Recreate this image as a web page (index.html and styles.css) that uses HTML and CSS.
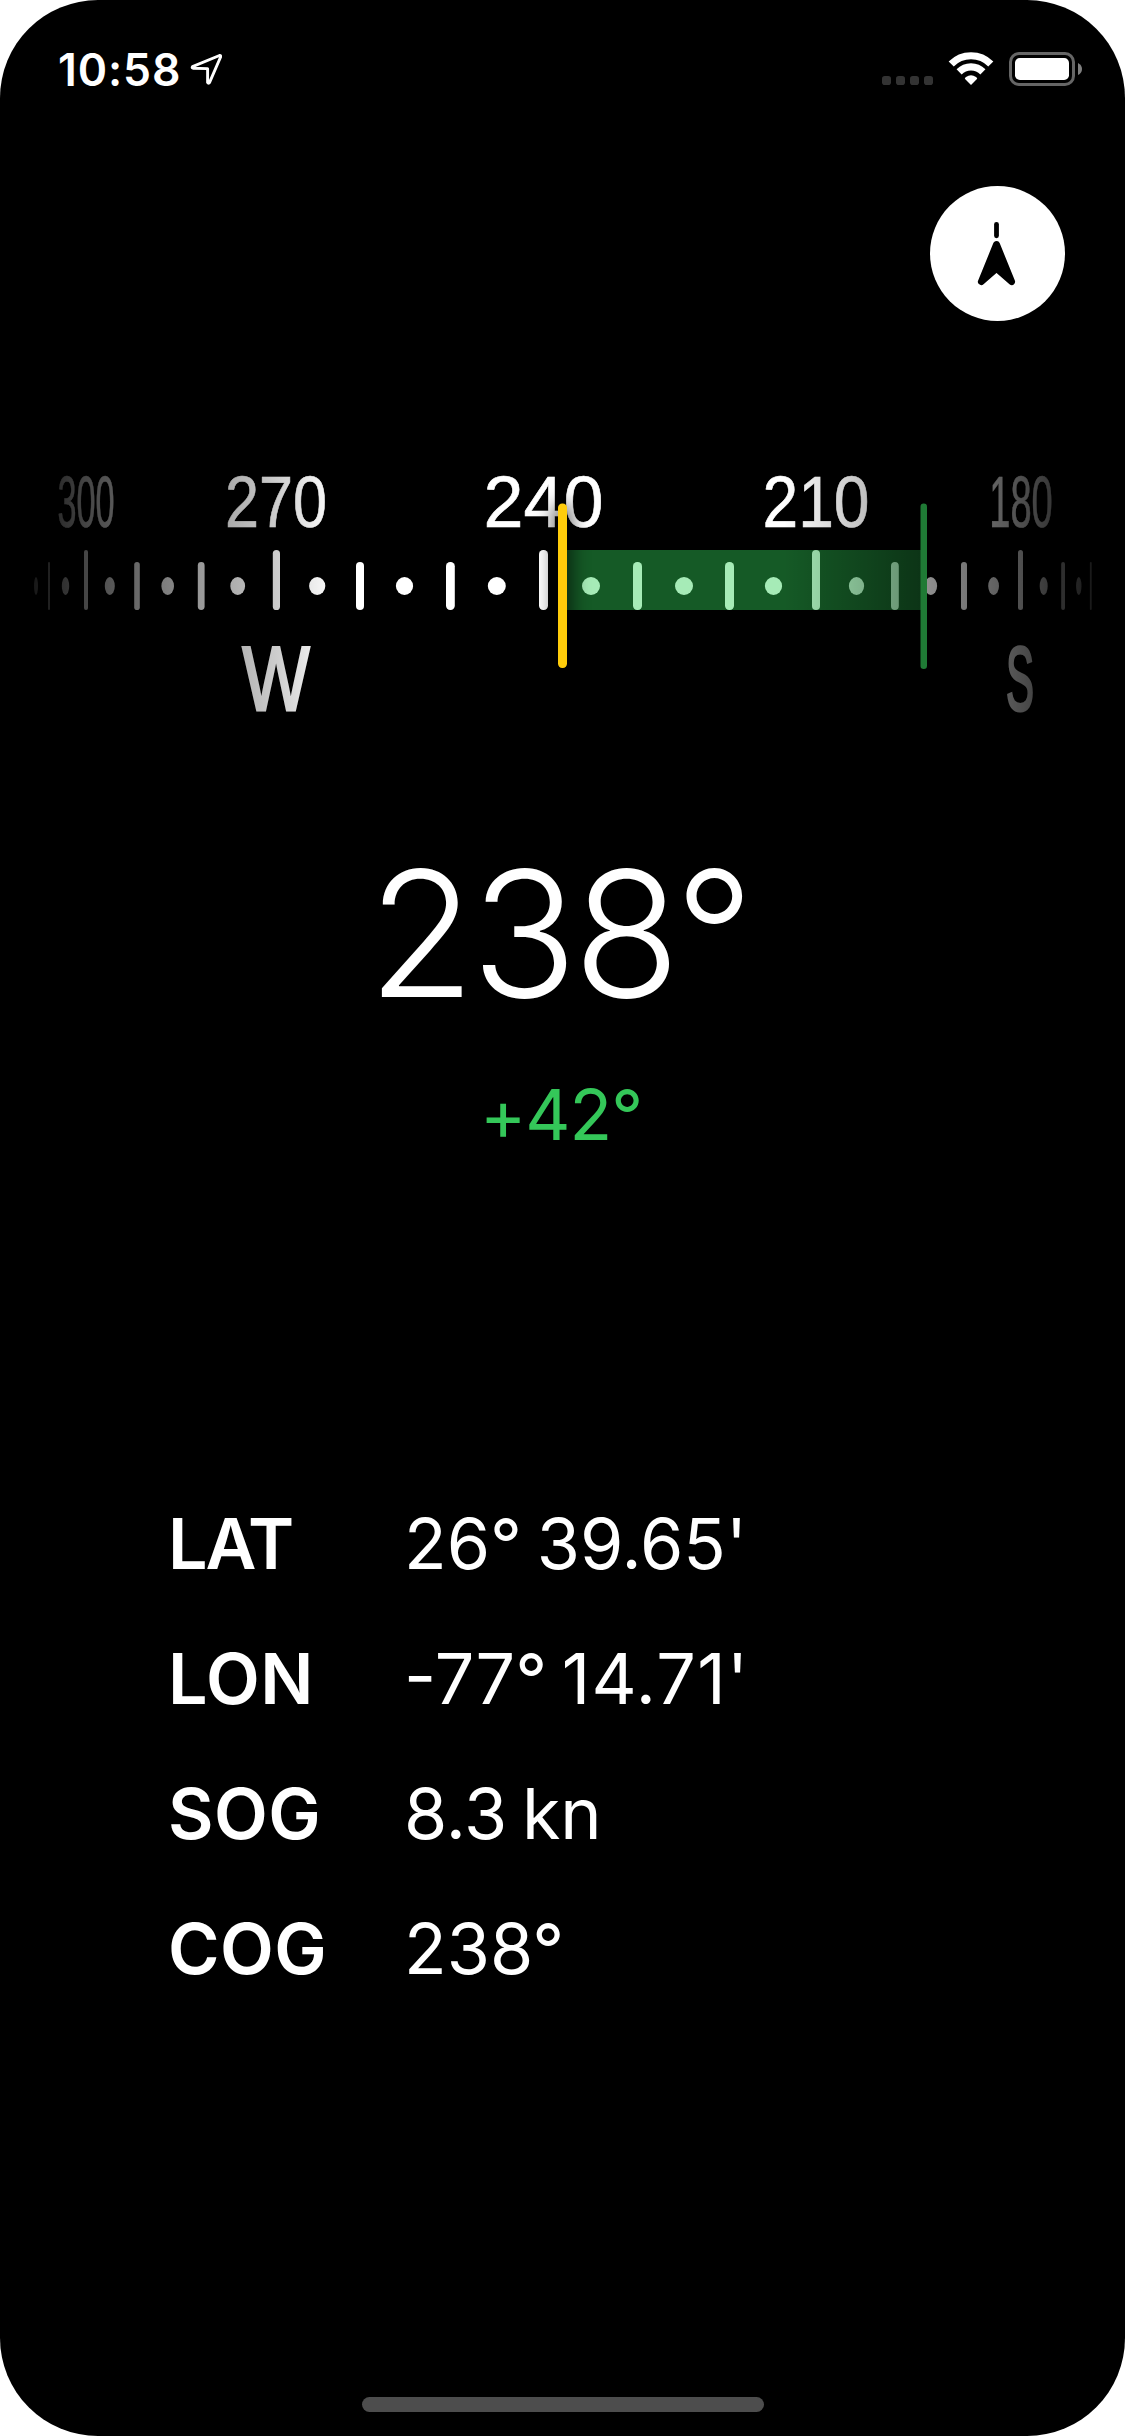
FILE: index.html
```html
<!DOCTYPE html>
<html lang="en">
<head>
<meta charset="utf-8">
<title>Compass</title>
<link rel="stylesheet" href="styles.css">
</head>
<body>
<main class="screen">
  <header class="status">
    <span class="time">10:58</span>
    <svg class="location" width="34" height="34" viewBox="0 0 34 34"><path d="M30.5 3.5 L3.5 14.6 Q2.6 15.8 4 16.2 L18.6 16.6 L18.6 30.5 Q19.6 32 20.7 30.2 L31.6 5 Q31.9 3.2 30.5 3.5 Z" fill="none" stroke="#fff" stroke-width="2.9" stroke-linejoin="round"/></svg>
    <svg class="indicators" width="204" height="36" viewBox="880 51 204 36">
      <g fill="#333"><rect x="882" y="76" width="9" height="9" rx="2.8"/><rect x="896" y="76" width="9" height="9" rx="2.8"/><rect x="910" y="76" width="9" height="9" rx="2.8"/><rect x="924" y="76" width="9" height="9" rx="2.8"/></g>
      <g fill="none" stroke="#fff" stroke-width="7.2"><path d="M951.2 64 A27.9 27.9 0 0 1 990.8 64"/><path d="M959.1 71.9 A16.8 16.8 0 0 1 982.9 71.9"/></g>
      <path d="M971 85 L964.8 78.8 Q965 77.8 966 77 Q971 73.4 976 77 Q977 77.8 977.2 78.8 Z" fill="#fff"/>
      <rect x="1010.5" y="53.5" width="63" height="31" rx="8.5" fill="none" stroke="#666" stroke-width="3"/>
      <rect x="1015" y="58" width="54" height="22" rx="4.8" fill="#fff"/>
      <path d="M1078 63 Q1082 65 1082 69 Q1082 73 1078 75 Z" fill="#808080"/>
    </svg>
  </header>

  <div class="toolbar">
    <button class="heading-mode" aria-label="Heading mode">
      <svg width="135" height="135" viewBox="930 186 135 135"><path d="M996.5 224.3 V235.8" stroke="#000" stroke-width="4.8" stroke-linecap="round"/><path d="M996.5 244.4 L981.3 281.7 L996.5 268.5 L1011.7 281.7 Z" stroke="#000" stroke-width="6.8" stroke-linejoin="round"/></svg>
    </button>
  </div>

  <svg class="dial" width="1125" height="260" viewBox="0 470 1125 260">
    <defs>
      <linearGradient id="fade" gradientUnits="userSpaceOnUse" x1="0" y1="0" x2="1125" y2="0">
        <stop offset=".0267" stop-opacity=".92"/><stop offset=".0436" stop-opacity=".86"/><stop offset=".0764" stop-opacity=".73"/>
        <stop offset=".1218" stop-opacity=".59"/><stop offset=".1787" stop-opacity=".4"/><stop offset=".2453" stop-opacity=".2"/>
        <stop offset=".2818" stop-opacity=".06"/><stop offset=".3" stop-opacity="0"/><stop offset=".697" stop-opacity="0"/>
        <stop offset=".7253" stop-opacity=".1"/><stop offset=".762" stop-opacity=".22"/><stop offset=".8276" stop-opacity=".45"/>
        <stop offset=".8569" stop-opacity=".53"/><stop offset=".9069" stop-opacity=".69"/><stop offset=".9449" stop-opacity=".82"/><stop offset=".97" stop-opacity=".9"/>
      </linearGradient>
      <filter id="soft" filterUnits="userSpaceOnUse" x="500" y="470" width="125" height="240"><feGaussianBlur stdDeviation="9"/></filter>
    </defs>
    <g fill="#fff">
      <g class="degrees">
        <text x="86" y="527" textLength="57" lengthAdjust="spacingAndGlyphs">300</text>
        <text x="276" y="527" textLength="102" lengthAdjust="spacingAndGlyphs">270</text>
        <text x="543.5" y="527" textLength="120" lengthAdjust="spacingAndGlyphs">240</text>
        <text x="816" y="527" textLength="107" lengthAdjust="spacingAndGlyphs">210</text>
        <text x="1021" y="527" textLength="63.5" lengthAdjust="spacingAndGlyphs">180</text>
      </g>
      <g class="cardinals">
        <text x="276" y="709.8" textLength="67" lengthAdjust="spacingAndGlyphs">W</text>
        <text x="1020" y="709.8" textLength="28" lengthAdjust="spacingAndGlyphs">S</text>
      </g>
      <rect x="48.1" y="562" width="1.8" height="48" rx=".9"/><rect x="84" y="550" width="4" height="60" rx="2"/>
      <rect x="134.2" y="562" width="5.6" height="48" rx="2.8"/><rect x="197.8" y="562" width="6.8" height="48" rx="3.4"/>
      <rect x="272.8" y="550" width="7.2" height="60" rx="3.6"/><rect x="356" y="562" width="8" height="48" rx="4"/>
      <rect x="446" y="562" width="8.8" height="48" rx="4.2"/><rect x="539" y="550" width="9" height="60" rx="4.2"/>
      <rect x="633" y="562" width="9" height="48" rx="4.2"/><rect x="725" y="562" width="9" height="48" rx="4.2"/>
      <rect x="812" y="550" width="8" height="60" rx="4"/><rect x="891" y="562" width="7.8" height="48" rx="3.9"/>
      <rect x="961" y="562" width="6" height="48" rx="3"/><rect x="1018" y="550" width="5" height="60" rx="2.5"/>
      <rect x="1061.2" y="562" width="3.8" height="48" rx="1.9"/><rect x="1089.9" y="562" width="1.8" height="48" rx=".9"/>
      <ellipse cx="36" cy="586" rx="2" ry="9"/><ellipse cx="65.5" cy="586" rx="3.7" ry="9"/><ellipse cx="109.8" cy="586" rx="5" ry="9"/>
      <ellipse cx="167.7" cy="586" rx="6.3" ry="9"/><ellipse cx="237.7" cy="586" rx="7.4" ry="9"/><ellipse cx="317.2" cy="586" rx="8.1" ry="9"/>
      <ellipse cx="404.5" cy="586" rx="8.6" ry="9"/><ellipse cx="496.8" cy="586" rx="9" ry="9"/><ellipse cx="591" cy="586" rx="9" ry="9"/>
      <ellipse cx="684" cy="586" rx="9" ry="9"/><ellipse cx="773.5" cy="586" rx="8.6" ry="9"/><ellipse cx="856.5" cy="586" rx="7.6" ry="9"/>
      <ellipse cx="930.8" cy="586" rx="6.3" ry="9"/><ellipse cx="993.6" cy="586" rx="5.4" ry="9"/><ellipse cx="1043.7" cy="586" rx="4" ry="9"/><ellipse cx="1078.8" cy="586" rx="2.7" ry="9"/>
    </g>
    <rect x="562" y="550" width="361" height="60" fill="#30d158" fill-opacity=".43"/>
    <rect x="0" y="470" width="1125" height="260" fill="url(#fade)"/>
    <rect x="553" y="503" width="19" height="166" rx="9" filter="url(#soft)" opacity=".6"/>
    <rect x="558" y="503.5" width="9" height="164.5" rx="4.2" fill="#ffcc0a"/>
    <rect x="920.5" y="503.5" width="6.5" height="165.5" rx="3.2" fill="#1f7a35"/>
  </svg>

  <h1 class="heading">238°</h1>
  <p class="delta">+42°</p>

  <dl class="readings">
    <dt class="tight">LAT</dt><dd>26° 39.65'</dd>
    <dt>LON</dt><dd>-77° <span class="loose">14.71'</span></dd>
    <dt>SOG</dt><dd>8.3 kn</dd>
    <dt>COG</dt><dd>238°</dd>
  </dl>

  <div class="home-bar"></div>
</main>
</body>
</html>
```
FILE: styles.css
```css
* { box-sizing: border-box; margin: 0; padding: 0; }

body { background: #fff; font-family: Inter, sans-serif; color: #fff; }

svg { display: block; flex: none; }

.screen {
  width: 1125px;
  height: 2436px;
  background: #000;
  border-radius: 98px;
  overflow: hidden;
  display: flex;
  flex-direction: column;
  align-items: center;
}

.status {
  width: 100%;
  height: 138px;
  padding: 0 41px 0 58px;
  display: flex;
  align-items: center;
  flex: none;
}
.time { font-size: 44.5px; line-height: 50px; font-weight: 600; letter-spacing: 0.9px; padding-top: 1px; }
.location { margin-left: 8px; }
.indicators { margin-left: auto; }

.toolbar {
  width: 100%;
  padding: 48px 60px 0;
  display: flex;
  justify-content: flex-end;
}
.heading-mode {
  width: 135px;
  height: 135px;
  border: 0;
  border-radius: 50%;
  background: #fff;
}

.dial {
  margin-top: 149px;
  overflow: visible;
  font-family: "Liberation Sans", Arial, sans-serif;
  text-anchor: middle;
}
.degrees { font-size: 72.5px; stroke: #fff; stroke-width: 0.6px; }
.cardinals { font-size: 90px; stroke: #fff; stroke-width: 2.8px; }

.heading {
  margin-top: 116px;
  padding-right: 7px;
  font-size: 175px;
  line-height: 175px;
  font-weight: 300;
  letter-spacing: -4px;
}
.delta {
  margin-top: 59px;
  padding-right: 3px;
  font-size: 70px;
  line-height: 70px;
  letter-spacing: -1px;
  color: #34c759;
}

.readings {
  width: 100%;
  margin-top: 326px;
  padding-left: 168px;
  display: grid;
  grid-template-columns: 236px 1fr;
  font-size: 70px;
  line-height: 135px;
  word-spacing: -5px;
}
.readings dt { font-weight: 600; letter-spacing: 0.4px; }
.readings .tight { letter-spacing: -2.2px; }
.loose { letter-spacing: 1.3px; }

.home-bar {
  width: 402px;
  height: 15px;
  margin: auto 0 24px;
  border-radius: 7.5px;
  background: #4d4d4d;
}
```
